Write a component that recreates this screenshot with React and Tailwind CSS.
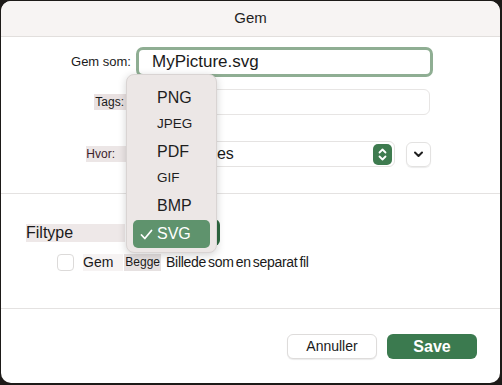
import React from 'react';

const formats = [
  { label: 'PNG', size: 'text-[16px]' },
  { label: 'JPEG', size: 'text-[13.5px]' },
  { label: 'PDF', size: 'text-[16px]' },
  { label: 'GIF', size: 'text-[13.5px]' },
  { label: 'BMP', size: 'text-[16px]' },
];

const App = () => {
  return (
    <div className="w-[502px] h-[385px] bg-[#1d1a18] pl-[1px] pt-[1px] pr-[2px] pb-[2px] font-['Liberation_Sans',Arial,sans-serif]">
      <div className="relative w-[499px] h-[382px] bg-white rounded-[10px] overflow-hidden flex flex-col">
        {/* Title bar */}
        <div className="h-[36px] shrink-0 bg-[#f7f4f3] border-b border-[#e2dfdd] flex items-center justify-center text-[15px] text-[#1f1f1f]">
          Gem
        </div>

        {/* Top section */}
        <div className="pt-[10px]">
          <div className="flex items-center h-[30px]">
            <div className="w-[130px] text-right text-[13px] text-[#1a1a1a]">Gem som:</div>
            <div className="ml-[5px] w-[297px] h-[30px] rounded-[7px] border-[3px] border-[#8fae93] flex items-center pl-[13px] text-[17px] text-[#1a1a1a]">
              MyPicture.svg
            </div>
          </div>

          <div className="flex items-center h-[26px] mt-[12px]">
            <div className="w-[130px] flex justify-end">
              <span className="bg-[#e9e1e1] text-[12px] text-[#1a1a1a] pl-[1px] pr-[7px] leading-[16px]">Tags:</span>
            </div>
            <div className="ml-[5px] w-[294px] h-[26px] rounded-[6px] border border-[#e7e5e4] bg-white" />
          </div>

          <div className="flex items-center h-[26px] mt-[26px]">
            <div className="w-[130px] flex justify-end">
              <span className="bg-[#ece6e6] text-[12px] text-[#3b1d2a] pr-[16px] leading-[16px]">Hvor:</span>
            </div>
            <div className="ml-[5px] w-[259px] h-[26px] rounded-[6px] border border-[#e5e3e2] flex items-center pl-[39px] pr-[2px] text-[16px] text-[#1a1a1a]">
              <span className="flex-1">Pictures</span>
              <div className="w-[19px] h-[21px] rounded-[5px] bg-[#3e7b4f] flex items-center justify-center">
                <svg width="9" height="15" viewBox="0 0 9 15" fill="none" stroke="white" strokeWidth="1.8" strokeLinecap="round" strokeLinejoin="round">
                  <path d="M1.5 5.5 L4.5 2.5 L7.5 5.5" />
                  <path d="M1.5 9.5 L4.5 12.5 L7.5 9.5" />
                </svg>
              </div>
            </div>
            <div className="ml-[11px] w-[25px] h-[25px] rounded-[6px] border border-[#e3e2e1] shadow-[0_1px_1px_rgba(0,0,0,0.08)] flex items-center justify-center">
              <svg width="11" height="8" viewBox="0 0 11 8" fill="none" stroke="#1f1f1f" strokeWidth="2" strokeLinecap="round" strokeLinejoin="round">
                <path d="M2 2.5 L5.5 6 L9 2.5" />
              </svg>
            </div>
          </div>
        </div>

        <div className="mt-[26px] h-px bg-[#e4e2e1]" />

        {/* File type section */}
        <div className="pt-[25px]">
          <div className="flex items-center h-[27px]">
            <span className="ml-[25px] w-[99px] bg-[#eee8e8] text-[16px] text-[#1a1a1a] leading-[18px]">Filtype</span>
            <div className="ml-[11px] w-[84px] h-[27px] rounded-[6px] bg-[#2f6a43]" />
          </div>
          <div className="flex items-center h-[17px] mt-[8px] pl-[56px]">
            <div className="w-[17px] h-[17px] rounded-[4px] border border-[#dcdad9] bg-white" />
            <span className="ml-[9px] bg-[#f6f3f3] text-[14px] text-[#1a1a1a] leading-[17px] pr-[10px]">Gem</span>
            <span className="ml-[1px] bg-[#e6e1e1] text-[12px] text-[#1a1a1a] leading-[17px] px-[1px]">Begge</span>
            <span className="ml-[5px] text-[14px] text-[#1a1a1a] leading-[17px] tracking-[-0.3px] [word-spacing:-1.5px]">Billede som en separat fil</span>
          </div>
        </div>

        <div className="mt-[37px] h-px bg-[#e4e2e1]" />

        {/* Footer */}
        <div className="flex-1 flex items-start justify-end pt-[25px] pr-[23px] gap-[10px]">
          <button className="w-[90px] h-[25px] rounded-[6px] bg-white border border-[#dedcdb] shadow-[0_1px_1px_rgba(0,0,0,0.08)] text-[14px] text-[#1a1a1a]">
            Annuller
          </button>
          <button className="w-[90px] h-[25px] rounded-[6px] bg-[#3b7a4f] text-[16px] font-bold text-white">
            Save
          </button>
        </div>

        {/* Format popup menu */}
        <div className="absolute left-[125px] top-[73px] w-[91px] h-[179px] rounded-[8px] bg-[#ece7e6] border border-[#d9d4d3] shadow-[0_2px_8px_rgba(0,0,0,0.18)] pt-[9px] px-[6px]">
          {formats.map((f) => (
            <div key={f.label} className={`h-[27px] flex items-center pl-[24px] text-[#1e1e1e] ${f.size}`}>
              {f.label}
            </div>
          ))}
          <div className="mt-[1px] h-[28px] rounded-[5px] bg-[#5f936d] flex items-center text-white text-[16px]">
            <svg className="ml-[7px]" width="13" height="11" viewBox="0 0 13 11" fill="none" stroke="white" strokeWidth="1.8" strokeLinecap="round" strokeLinejoin="round">
              <path d="M1.5 6 L4.8 9.5 L11.5 1.5" />
            </svg>
            <span className="ml-[4px]">SVG</span>
          </div>
        </div>
      </div>
    </div>
  );
};

export default App;
